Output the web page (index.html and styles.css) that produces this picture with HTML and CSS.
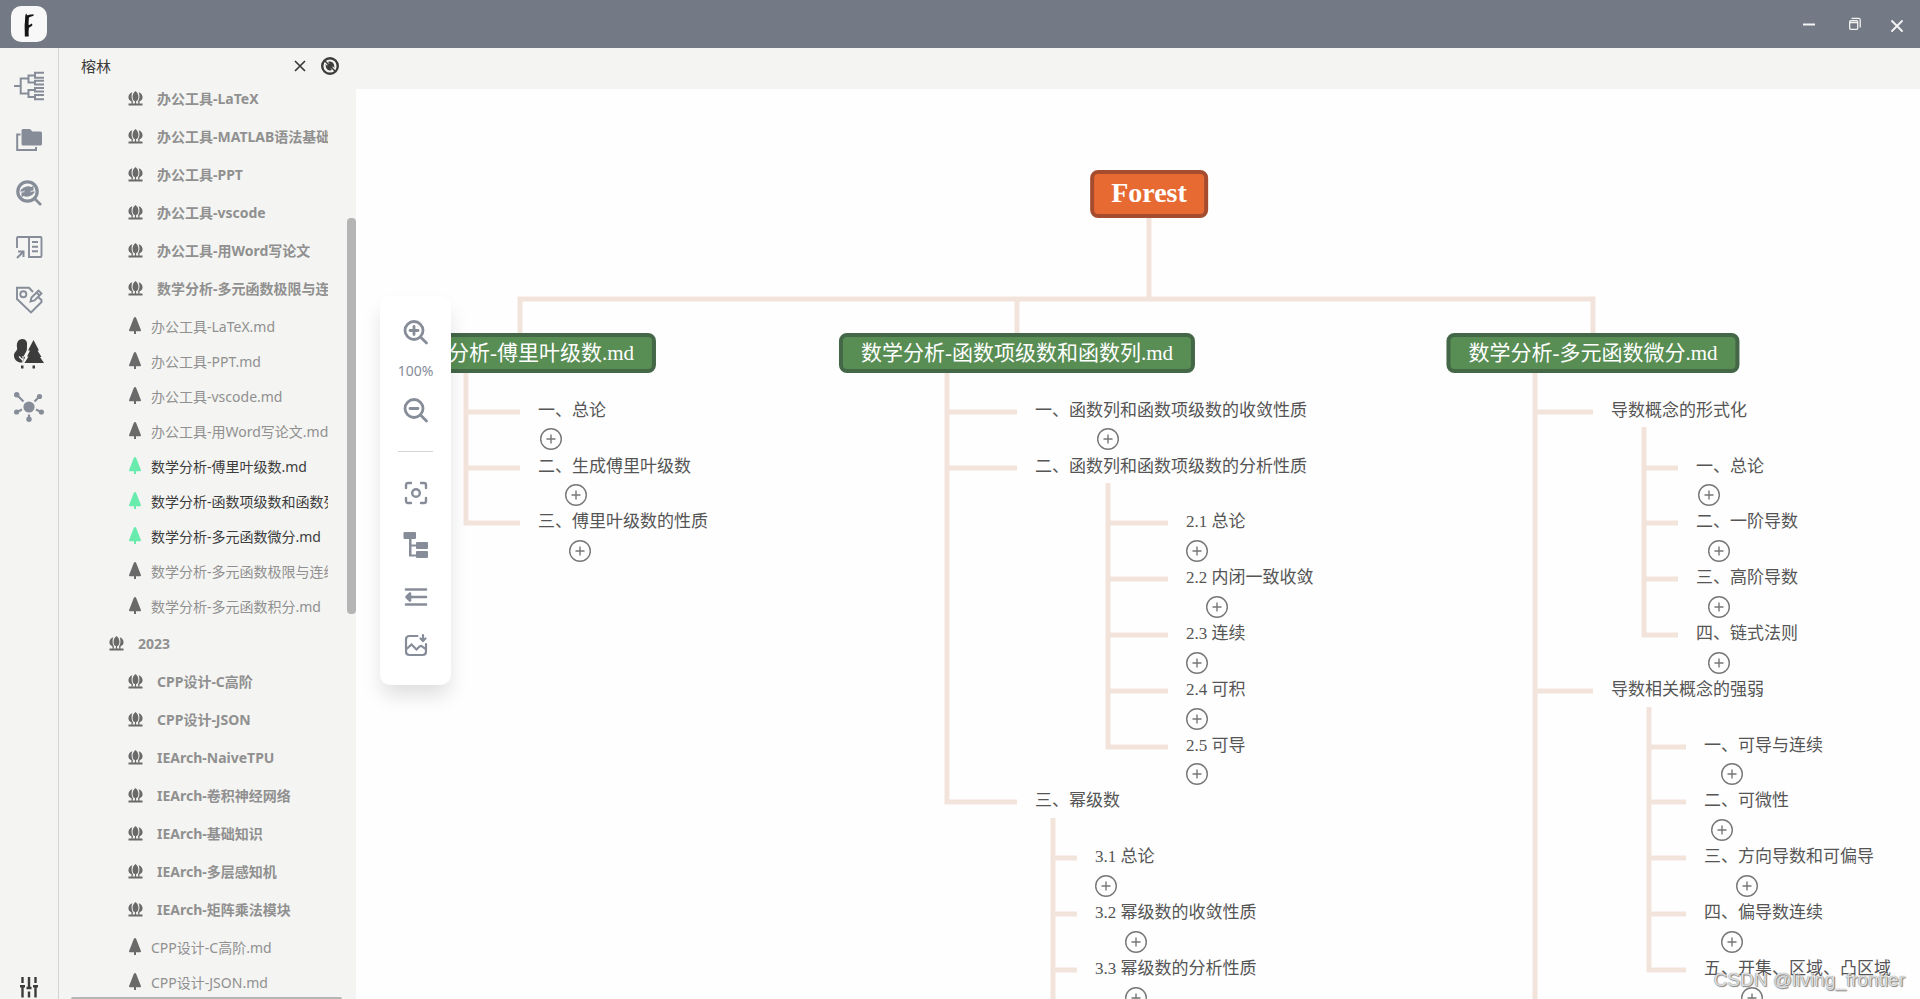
FILE: index.html
```
<!DOCTYPE html>
<html lang="zh-CN">
<head>
<meta charset="utf-8">
<title>Forest</title>
<link rel="stylesheet" href="styles.css">
</head>
<body>
<svg class="defs" aria-hidden="true">
  <symbol id="grove" viewBox="0 0 15 15"><path fill="currentColor" d="M0.5 12.5h14v2h-14zM7.5 0C9.6 1.6 10.6 4 10.4 6.400C10.300 8.500 9.400 9.700 8.100 10V12.500H6.900V10C5.600 9.700 4.700 8.500 4.600 6.400C4.400 4 5.400 1.600 7.500 0zM4.300 1.200C3.200 4 3.300 8 5 10.200L4.600 12.600H3.600L3.400 10.300C-1 8.800-.4 2.800 4.300 1.200zM10.700 1.200C11.800 4 11.700 8 10 10.200L10.400 12.600H11.400L11.600 10.300C16 8.800 15.400 2.800 10.700 1.200z"/></symbol>
  <symbol id="tree" viewBox="0 0 12 17"><path fill="currentColor" d="M6 0C7 0 7.600 1.800 8.600 4.500L12 13.200C12 14 11.500 14.200 11 14.200H7V17H5V14.200H1C.5 14.200 0 14 0 13.200L3.400 4.500C4.400 1.800 5 0 6 0z"/></symbol>
  <symbol id="plus" viewBox="0 0 22 22"><g fill="none" stroke="currentColor" stroke-width="1.400"><circle cx="11" cy="11" r="10.300"/><path d="M6.500 11h9M11 6.500v9"/></g></symbol>
</svg>

<header class="titlebar">
  <div class="logo">
    <svg viewBox="0 0 36 36" width="36" height="36"><path fill="#151515" d="M15.200 7.500C16 9 16.300 9.400 17 9.200C18.500 8 20.500 8.600 22.500 8.200L22.700 9.600C20.500 11 18.200 10.500 17.800 12.500L17.500 18.800C19 19.400 19.400 18 20.500 17.400L21.600 19C20.500 21 18.500 20.500 17.900 22C17.500 25 17.600 28 17.800 30.500H13.800C14 25 13.200 20 14 15C14.300 12 13.800 9.500 15.200 7.500z"/></svg>
  </div>
  <div class="window-controls">
    <button type="button" aria-label="最小化"><svg viewBox="0 0 14 14" width="14" height="14"><path d="M1 7.500h12" stroke="#f4f4f2" stroke-width="2"/></svg></button>
    <button type="button" aria-label="还原"><svg viewBox="0 0 14 14" width="14" height="14"><g fill="none" stroke="#f4f4f2" stroke-width="1.300"><rect x="1.700" y="3.700" width="8" height="8.600" rx="1"/><path d="M3.500 1.300H10.500Q12.200 1.300 12.200 3V10.500M2 5.500h8"/></g></svg></button>
    <button type="button" class="close-window" aria-label="关闭"><svg viewBox="0 0 14 14" width="14" height="14"><path d="M2 2l10 10M12 2L2 12" stroke="#f4f4f2" stroke-width="1.900" stroke-linecap="round"/></svg></button>
  </div>
</header>

<div class="app">
  <nav class="rail">
    <div class="rail-tools">
      <button type="button" aria-label="导图"><svg viewBox="0 0 30 30"><path fill="none" stroke="currentColor" stroke-width="2" d="M0 15H6.700M14.500 7.500H6.700V22.500H14.500M21 4.500H14.500V11.500H21M21 19H14.500V26H21M30 1.800H21V6.800H30M30 9.800H21V13.400H30M30 17H21V20.600H30M30 24H21V28.200H30"/></svg></button>
      <button type="button" aria-label="文件"><svg viewBox="0 0 30 30"><path fill="none" stroke="currentColor" stroke-width="2" d="M6.500 9.500H3.200V25H22V22"/><path fill="currentColor" d="M9 4H16L18.500 6.500H26.500Q28 6.500 28 8V19Q28 20.500 26.500 20.500H9Q7.500 20.500 7.500 19V5.500Q7.500 4 9 4z"/></svg></button>
      <button type="button" aria-label="搜索"><svg viewBox="0 0 30 30"><g fill="none" stroke="currentColor"><circle cx="13.500" cy="13.500" r="9.700" stroke-width="3.200"/><path stroke-width="2.600" d="M20.500 20.500L27 27"/></g><path fill="currentColor" d="M6 13.500C8 9.500 13 7 17.500 9L19.500 7.500V12.500L14.500 13L16 11.500C13 10.500 11 11.500 9.500 13.500zM21 13.500C19 17.500 14 20 9.500 18L7.500 19.500V14.500L12.500 14L11 15.500C14 16.500 16 15.500 17.500 13.500z"/><circle cx="13.500" cy="13.500" r="3.200" fill="currentColor"/></svg></button>
      <button type="button" aria-label="大纲"><svg viewBox="0 0 30 30"><g fill="none" stroke="currentColor" stroke-width="1.900"><path d="M3 16V6Q3 5 4 5H26.500Q27.500 5 27.500 6V24Q27.500 25 26.500 25H15V5M18 10h6M18 14.700h6M18 19.300h6"/><path stroke-width="2" d="M3 26L9 20M4 19.500H9.500V25"/></g></svg></button>
      <button type="button" aria-label="标签"><svg viewBox="0 0 30 30"><g fill="none" stroke="currentColor" stroke-width="1.900"><path d="M19 7L15 2.800H3V14L17 27.500L27.500 17V15L24.500 12.500"/><circle cx="9.300" cy="9.300" r="3"/><path d="M16.500 16.500L17.500 12.500L24.500 5.500L27.500 8.500L20.500 15.500zM22.500 7.500L25.500 10.500"/></g></svg></button>
      <button type="button" class="active" aria-label="榕林"><svg viewBox="0 0 30 30"><path fill="currentColor" d="M19.500 1L25 11.500H23.500L27.500 18H26L30 24H10.500L14.500 17.500H13L16 11.500H14zM18.500 26.500h2.500V29.500h-2.500zM7 26.500h2.500V29.500H7zM8.500 0C12 0 13.500 3 13 6.500C12.700 8.500 13.500 9.500 12.500 12L9.500 17.500L11 18L9 23.500C3 24 0 20.500 0 16.500C0 13 3 12 3.200 9.500C2 4 4 0 8.500 0z"/><path d="M5 17.500L9 21.500M9 17v7" stroke="#f4f4f2" stroke-width="1.200"/></svg></button>
      <button type="button" aria-label="图谱"><svg viewBox="0 0 30 30"><g fill="currentColor"><circle cx="15" cy="15" r="5.600"/><circle cx="2.700" cy="2.800" r="2.700"/><circle cx="25.500" cy="4.500" r="2.600"/><circle cx="2.600" cy="20" r="2.600"/><circle cx="27.400" cy="20" r="2.600"/><circle cx="15" cy="27.300" r="2.700"/></g><path fill="none" stroke="currentColor" stroke-width="2.200" d="M3 3L9.500 9.500M25 5L20.500 9.500M3 20L8 17.500M27 20L22 17.500M15 27V22.500"/></svg></button>
    </div>
    <button type="button" class="settings" aria-label="设置"><svg viewBox="0 -3 30 30"><path fill="none" stroke="currentColor" stroke-width="2.400" d="M8.500 5V11M8.500 14V25.500M15 5V16M15 19.500V25.500M21.500 5V11M21.500 14V25.500M6 14.200H11M12.500 16H17.500M19 14.200H24"/></svg></button>
  </nav>

  <aside class="sidebar">
    <div class="sidebar-head">
      <h1>榕林</h1>
      <button type="button" aria-label="关闭"><svg viewBox="0 0 18 18" width="18" height="18"><path d="M4 4l10 10M14 4L4 14" stroke="currentColor" stroke-width="1.700" fill="none"/></svg></button>
      <button type="button" aria-label="刷新"><svg viewBox="0 0 18 18" width="18" height="18"><circle cx="9" cy="9" r="7.800" fill="none" stroke="currentColor" stroke-width="2.400"/><path fill="currentColor" d="M7 5C9.500 4 12 5 13 7.500L13.500 11L11 8.500L9 7zM11 13C8.500 14 6 13 5 10.500L4.500 7L7 9.500L9 11z"/><path d="M4 4L14 14" stroke="currentColor" stroke-width="1.500"/><circle cx="9" cy="9" r="2.800" fill="currentColor"/></svg></button>
    </div>
    <div class="tree">
      <ul class="folders nested">
        <li><svg><use href="#grove"/></svg><span>办公工具-LaTeX</span></li>
        <li><svg><use href="#grove"/></svg><span>办公工具-MATLAB语法基础</span></li>
        <li><svg><use href="#grove"/></svg><span>办公工具-PPT</span></li>
        <li><svg><use href="#grove"/></svg><span>办公工具-vscode</span></li>
        <li><svg><use href="#grove"/></svg><span>办公工具-用Word写论文</span></li>
        <li><svg><use href="#grove"/></svg><span>数学分析-多元函数极限与连续</span></li>
      </ul>
      <ul class="files">
        <li><svg><use href="#tree"/></svg><span>办公工具-LaTeX.md</span></li>
        <li><svg><use href="#tree"/></svg><span>办公工具-PPT.md</span></li>
        <li><svg><use href="#tree"/></svg><span>办公工具-vscode.md</span></li>
        <li><svg><use href="#tree"/></svg><span>办公工具-用Word写论文.md</span></li>
        <li class="planted"><svg><use href="#tree"/></svg><span>数学分析-傅里叶级数.md</span></li>
        <li class="planted"><svg><use href="#tree"/></svg><span>数学分析-函数项级数和函数列.md</span></li>
        <li class="planted"><svg><use href="#tree"/></svg><span>数学分析-多元函数微分.md</span></li>
        <li><svg><use href="#tree"/></svg><span>数学分析-多元函数极限与连续.md</span></li>
        <li><svg><use href="#tree"/></svg><span>数学分析-多元函数积分.md</span></li>
      </ul>
      <ul class="folders">
        <li><svg><use href="#grove"/></svg><span>2023</span></li>
      </ul>
      <ul class="folders nested">
        <li><svg><use href="#grove"/></svg><span>CPP设计-C高阶</span></li>
        <li><svg><use href="#grove"/></svg><span>CPP设计-JSON</span></li>
        <li><svg><use href="#grove"/></svg><span>IEArch-NaiveTPU</span></li>
        <li><svg><use href="#grove"/></svg><span>IEArch-卷积神经网络</span></li>
        <li><svg><use href="#grove"/></svg><span>IEArch-基础知识</span></li>
        <li><svg><use href="#grove"/></svg><span>IEArch-多层感知机</span></li>
        <li><svg><use href="#grove"/></svg><span>IEArch-矩阵乘法模块</span></li>
      </ul>
      <ul class="files">
        <li><svg><use href="#tree"/></svg><span>CPP设计-C高阶.md</span></li>
        <li><svg><use href="#tree"/></svg><span>CPP设计-JSON.md</span></li>
      </ul>
    </div>
    <div class="thumb-y"></div>
    <div class="thumb-x"></div>
  </aside>

  <main class="workspace">
    <div class="canvas">
      <svg class="links" aria-hidden="true"><path d="M793 126V209M164 246V209H1237V246M661 209V246M110 281V433H164M110 322H164M110 378H164M591 281V712H661M591 322H661M591 378H661M752 393V657H812M752 433H812M752 489H812M752 545H812M752 601H812M697 728V940M697 768H721M697 824H721M697 880H721M1179 281V940M1179 322H1237M1179 601H1237M1288 337V545H1322M1288 378H1322M1288 433H1322M1288 489H1322M1293 617V880H1330M1293 657H1330M1293 712H1330M1293 768H1330M1293 824H1330"/></svg>

      <div class="node root" style="left:793px;top:104px">Forest</div>
      <div class="node doc" style="left:164px;top:263px">数学分析-傅里叶级数.md</div>
      <div class="node doc" style="left:661px;top:263px">数学分析-函数项级数和函数列.md</div>
      <div class="node doc" style="left:1237px;top:263px">数学分析-多元函数微分.md</div>

      <div class="topic" style="left:182px;top:322px">一、总论</div>
      <div class="topic" style="left:182px;top:378px">二、生成傅里叶级数</div>
      <div class="topic" style="left:182px;top:433px">三、傅里叶级数的性质</div>

      <div class="topic" style="left:679px;top:322px">一、函数列和函数项级数的收敛性质</div>
      <div class="topic" style="left:679px;top:378px">二、函数列和函数项级数的分析性质</div>
      <div class="topic" style="left:830px;top:433px">2.1 总论</div>
      <div class="topic" style="left:830px;top:489px">2.2 内闭一致收敛</div>
      <div class="topic" style="left:830px;top:545px">2.3 连续</div>
      <div class="topic" style="left:830px;top:601px">2.4 可积</div>
      <div class="topic" style="left:830px;top:657px">2.5 可导</div>
      <div class="topic" style="left:679px;top:712px">三、幂级数</div>
      <div class="topic" style="left:739px;top:768px">3.1 总论</div>
      <div class="topic" style="left:739px;top:824px">3.2 幂级数的收敛性质</div>
      <div class="topic" style="left:739px;top:880px">3.3 幂级数的分析性质</div>

      <div class="topic" style="left:1255px;top:322px">导数概念的形式化</div>
      <div class="topic" style="left:1340px;top:378px">一、总论</div>
      <div class="topic" style="left:1340px;top:433px">二、一阶导数</div>
      <div class="topic" style="left:1340px;top:489px">三、高阶导数</div>
      <div class="topic" style="left:1340px;top:545px">四、链式法则</div>
      <div class="topic" style="left:1255px;top:601px">导数相关概念的强弱</div>
      <div class="topic" style="left:1348px;top:657px">一、可导与连续</div>
      <div class="topic" style="left:1348px;top:712px">二、可微性</div>
      <div class="topic" style="left:1348px;top:768px">三、方向导数和可偏导</div>
      <div class="topic" style="left:1348px;top:824px">四、偏导数连续</div>
      <div class="topic" style="left:1348px;top:880px">五、开集、区域、凸区域</div>

      <button type="button" class="expand" aria-label="展开" style="left:195px;top:349px"><svg><use href="#plus"/></svg></button>
      <button type="button" class="expand" aria-label="展开" style="left:220px;top:405px"><svg><use href="#plus"/></svg></button>
      <button type="button" class="expand" aria-label="展开" style="left:224px;top:461px"><svg><use href="#plus"/></svg></button>
      <button type="button" class="expand" aria-label="展开" style="left:752px;top:349px"><svg><use href="#plus"/></svg></button>
      <button type="button" class="expand" aria-label="展开" style="left:841px;top:461px"><svg><use href="#plus"/></svg></button>
      <button type="button" class="expand" aria-label="展开" style="left:861px;top:517px"><svg><use href="#plus"/></svg></button>
      <button type="button" class="expand" aria-label="展开" style="left:841px;top:573px"><svg><use href="#plus"/></svg></button>
      <button type="button" class="expand" aria-label="展开" style="left:841px;top:629px"><svg><use href="#plus"/></svg></button>
      <button type="button" class="expand" aria-label="展开" style="left:841px;top:684px"><svg><use href="#plus"/></svg></button>
      <button type="button" class="expand" aria-label="展开" style="left:750px;top:796px"><svg><use href="#plus"/></svg></button>
      <button type="button" class="expand" aria-label="展开" style="left:780px;top:852px"><svg><use href="#plus"/></svg></button>
      <button type="button" class="expand" aria-label="展开" style="left:780px;top:908px"><svg><use href="#plus"/></svg></button>
      <button type="button" class="expand" aria-label="展开" style="left:1353px;top:405px"><svg><use href="#plus"/></svg></button>
      <button type="button" class="expand" aria-label="展开" style="left:1363px;top:461px"><svg><use href="#plus"/></svg></button>
      <button type="button" class="expand" aria-label="展开" style="left:1363px;top:517px"><svg><use href="#plus"/></svg></button>
      <button type="button" class="expand" aria-label="展开" style="left:1363px;top:573px"><svg><use href="#plus"/></svg></button>
      <button type="button" class="expand" aria-label="展开" style="left:1376px;top:684px"><svg><use href="#plus"/></svg></button>
      <button type="button" class="expand" aria-label="展开" style="left:1366px;top:740px"><svg><use href="#plus"/></svg></button>
      <button type="button" class="expand" aria-label="展开" style="left:1391px;top:796px"><svg><use href="#plus"/></svg></button>
      <button type="button" class="expand" aria-label="展开" style="left:1376px;top:852px"><svg><use href="#plus"/></svg></button>
      <button type="button" class="expand" aria-label="展开" style="left:1396px;top:908px"><svg><use href="#plus"/></svg></button>

      <div class="toolbar">
        <button type="button" aria-label="放大"><svg viewBox="0 0 26 26"><g fill="none" stroke="currentColor" stroke-width="2.800" stroke-linecap="round"><circle cx="11" cy="11.500" r="9"/><path d="M18 18.500L23.500 24M7 11.500h8M11 7.500v8"/></g></svg></button>
        <output>100%</output>
        <button type="button" aria-label="缩小"><svg viewBox="0 0 26 26"><g fill="none" stroke="currentColor" stroke-width="2.800" stroke-linecap="round"><circle cx="11" cy="11.500" r="9"/><path d="M18 18.500L23.500 24M7 11.500h8"/></g></svg></button>
        <hr>
        <button type="button" aria-label="居中"><svg viewBox="0 0 26 26"><g fill="none" stroke="currentColor" stroke-width="2.400" stroke-linecap="round"><circle cx="13" cy="13" r="3.800"/><path d="M3 8V5Q3 3 5 3H8M18 3H21Q23 3 23 5V8M23 18V21Q23 23 21 23H18M8 23H5Q3 23 3 21V18"/></g></svg></button>
        <button type="button" class="layout" aria-label="布局"><svg viewBox="0 0 26 26"><path fill="currentColor" d="M1 0H12Q13 0 13 1V6Q13 7 12 7H8.500V12.500H13V11Q13 10 14 10H24Q25 10 25 11V16Q25 17 24 17H14Q13 17 13 16V14.500H8.500V22.500H13V20Q13 19 14 19H24Q25 19 25 20V25Q25 26 24 26H14Q13 26 13 25V24.500H6V7H1.500Q.5 7 .5 6V1z"/></svg></button>
        <button type="button" class="collapse" aria-label="收起"><svg viewBox="0 0 26 26"><path fill="none" stroke="currentColor" stroke-width="2.600" stroke-linecap="round" stroke-linejoin="round" d="M3 5.500H23M4 13H23M3 20.500H23M7 9.500L3.500 13L7 16.500z"/></svg></button>
        <button type="button" class="export" aria-label="导出图片"><svg viewBox="0 0 26 26"><g fill="none" stroke="currentColor" stroke-width="2.200" stroke-linecap="round"><path d="M14.500 4H6.500Q3 4 3 7.500V19.500Q3 23 6.500 23H19.500Q23 23 23 19.500V12M3 17.500L8.500 12.500L13.500 17.500L16.500 14.500L18.500 14L23 17.500"/><path d="M20 3V8M17.500 6.500L20 9L22.500 6.500"/></g></svg></button>
      </div>
      <div class="watermark">CSDN @living_frontier</div>
    </div>
  </main>
</div>
</body>
</html>
```
FILE: styles.css
```
* {
  box-sizing: border-box;
}

body {
  margin: 0;
  height: 100vh;
  display: flex;
  flex-direction: column;
  overflow: hidden;
  background: #f4f4f2;
  color: #3c3c3c;
  font-family: "Noto Sans", "Noto Sans CJK SC", sans-serif;
  font-size: 14px;
}

button {
  display: flex;
  align-items: center;
  justify-content: center;
  margin: 0;
  padding: 0;
  border: 0;
  background: none;
  color: inherit;
}

ul {
  margin: 0;
  padding: 0;
  list-style: none;
}

.defs {
  position: absolute;
  width: 0;
  height: 0;
}

.titlebar {
  display: flex;
  flex: none;
  align-items: center;
  justify-content: space-between;
  height: 48px;
  padding: 0 16px 0 11px;
  background: #737985;
}

.logo {
  width: 36px;
  height: 36px;
  border-radius: 10px;
  background: #f8f8f8;
}

.window-controls {
  display: flex;
  gap: 32px;
}

.window-controls .close-window {
  margin-left: -4px;
  padding-top: 4px;
}

.app {
  display: flex;
  flex: 1;
  min-height: 0;
}

.rail {
  display: flex;
  flex: none;
  flex-direction: column;
  align-items: center;
  justify-content: space-between;
  width: 59px;
  padding-top: 23px;
  border-right: 1px solid #d4d4d4;
  color: #868d99;
}

.rail button,
.rail svg {
  width: 30px;
  height: 30px;
}

.rail-tools {
  display: flex;
  flex-direction: column;
  justify-content: space-between;
  height: 351px;
}

.rail .active,
.rail .settings {
  color: #3c3c3c;
}

.sidebar {
  position: relative;
  display: flex;
  flex: none;
  flex-direction: column;
  width: 297px;
}

.sidebar-head {
  display: flex;
  flex: none;
  align-items: center;
  gap: 12px;
  height: 31px;
  padding: 4px 17px 0 22px;
}

.sidebar-head h1 {
  flex: 1;
  margin: 0;
  font-size: 15px;
  font-weight: 400;
  line-height: 20px;
}

.tree {
  flex: 1;
  min-height: 0;
  margin-right: 28px;
  overflow: hidden;
}

.tree li {
  display: flex;
  align-items: center;
  overflow: hidden;
  white-space: nowrap;
  color: #909090;
}

.tree svg {
  flex: none;
  color: #6a6a6a;
}

.folders li {
  gap: 14px;
  height: 38px;
  padding-left: 50px;
  font-weight: 700;
}

.folders.nested li {
  padding-left: 69px;
}

.folders svg {
  width: 15px;
  height: 15px;
}

.files {
  padding: 1px 0;
}

.files li {
  gap: 10px;
  height: 35px;
  padding-left: 70px;
}

.files svg {
  width: 12px;
  height: 17px;
}

.files .planted {
  color: #3c3c3c;
}

.files .planted svg {
  color: #69ebae;
}

.thumb-y,
.thumb-x {
  position: absolute;
  background: #b5b5b5;
}

.thumb-y {
  top: 170px;
  right: 0;
  width: 9px;
  height: 396px;
  border-radius: 4px;
}

.thumb-x {
  right: 14px;
  bottom: 0;
  left: 12px;
  height: 2px;
  border-radius: 2px 2px 0 0;
}

.workspace {
  display: flex;
  flex: 1;
  min-width: 0;
  padding-top: 41px;
}

.canvas {
  position: relative;
  flex: 1;
  overflow: hidden;
  border-top: 1px solid #fefefe;
  background: #fefefe;
  font-family: "Liberation Serif", "Noto Sans CJK SC", serif;
}

.links {
  position: absolute;
  inset: 0;
  width: 100%;
  height: 100%;
  fill: none;
  stroke: #f2e4db;
  stroke-width: 5px;
}

.node,
.topic,
.expand {
  position: absolute;
  white-space: nowrap;
}

.node {
  transform: translate(-50%, -50%);
  border-radius: 8px;
  color: #fff;
}

.root {
  padding: 0 17px 3px;
  border: 4px solid #a54c2f;
  background: #e86a33;
  font-size: 28px;
  font-weight: 700;
  line-height: 37px;
}

.doc {
  padding: 0 18px;
  border: 4px solid #446748;
  background: #588d54;
  font-size: 21px;
  line-height: 32px;
}

.topic {
  height: 24px;
  margin-top: -13px;
  color: #555;
  font-size: 17px;
  line-height: 24px;
}

.expand {
  width: 22px;
  height: 22px;
  margin: -11px 0 0 -11px;
  color: #777;
}

.expand svg {
  width: 22px;
  height: 22px;
}

.toolbar {
  position: absolute;
  top: 206px;
  left: 24px;
  display: flex;
  flex-direction: column;
  align-items: center;
  width: 71px;
  padding: 23px 0 27px;
  border-radius: 10px;
  background: #fff;
  box-shadow: 0 12px 20px -2px rgba(0, 0, 0, 0.13);
  color: #868d99;
}

.toolbar svg {
  width: 26px;
  height: 26px;
}

.toolbar output {
  margin: 14px 0;
  font-family: "Noto Sans", sans-serif;
  font-size: 14px;
  line-height: 24px;
}

.toolbar hr {
  width: 35px;
  height: 1px;
  margin: 28px 0;
  border: 0;
  background: #d4d4d4;
}

.toolbar .layout,
.toolbar .collapse {
  margin-top: 26px;
}

.toolbar .export {
  margin-top: 22px;
}

.watermark {
  position: absolute;
  right: 15px;
  bottom: 7px;
  color: rgba(255, 255, 255, 0.8);
  font-family: "Liberation Sans", sans-serif;
  font-size: 19px;
  line-height: 24px;
  text-shadow: 0 0 1px #555, 1px 1px 1px #888;
}
```
